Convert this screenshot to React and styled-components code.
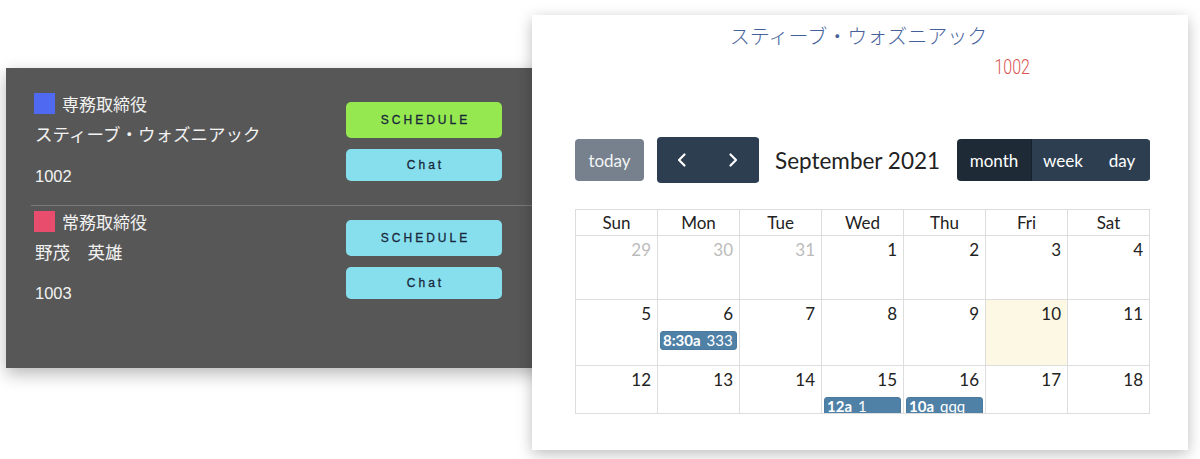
import React from "react"
import styled, { createGlobalStyle } from "styled-components"

const GlobalStyle = createGlobalStyle`
  html, body {
    margin: 0;
    padding: 0;
    background: #ffffff;
  }
  * {
    box-sizing: border-box;
  }
`

const Desktop = styled.div`
  position: relative;
  width: 1200px;
  height: 459px;
  overflow: hidden;
  background: #ffffff;
`

const MemberWindow = styled.div`
  position: absolute;
  left: 6px;
  top: 68px;
  width: 560px;
  height: 300px;
  background: #575757;
  box-shadow: 0 6px 16px rgba(0, 0, 0, 0.28);
  padding-top: 23px;
  font-family: "Liberation Sans", "Noto Sans CJK JP", sans-serif;
  color: #f2f2f2;
`

const MemberBlock = styled.div`
  display: flex;
  padding-left: 28px;
  height: ${(p) => p.h}px;
`

const MemberInfo = styled.div`
  width: 312px;
  display: flex;
  flex-direction: column;
`

const RoleRow = styled.div`
  display: flex;
  align-items: center;
  gap: 7px;
  height: 24px;
  font-size: 17px;
`

const RoleMark = styled.span`
  width: 21px;
  height: 21px;
  background: ${(p) => p.color};
`

const MemberName = styled.div`
  margin-top: 8px;
  line-height: 24px;
  font-size: 17.5px;
  padding-left: 1px;
`

const MemberNo = styled.div`
  margin-top: ${(p) => p.gap}px;
  line-height: 24px;
  font-size: 16.5px;
  padding-left: 1px;
`

const ButtonColumn = styled.div`
  display: flex;
  flex-direction: column;
  gap: 11px;
  padding-top: 11px;
`

const ActionButton = styled.button`
  width: 156px;
  height: ${(p) => p.h}px;
  border: none;
  border-radius: 5px;
  background: ${(p) => (p.active ? "#95e84f" : "#87dfee")};
  color: #18273a;
  font-family: "Liberation Sans", Arial, sans-serif;
  font-size: 12px;
  font-weight: 400;
  letter-spacing: 3px;
  padding: 0 0 0 3px;
  -webkit-text-stroke: 0.3px #18273a;
  cursor: pointer;
`

const Divider = styled.div`
  margin-left: 25px;
  height: 1px;
  background: #7a7a7a;
  margin-bottom: 3px;
`

const CalendarWindow = styled.div`
  position: absolute;
  left: 532px;
  top: 15px;
  width: 656px;
  height: 435px;
  background: #ffffff;
  box-shadow: 0 4px 14px rgba(0, 0, 0, 0.26);
  z-index: 2;
  padding: 7px 38px 0 43px;
`

const CalendarTitle = styled.div`
  text-align: center;
  margin-left: -8px;
  line-height: 28px;
  font-family: "Noto Sans CJK JP", sans-serif;
  font-weight: 300;
  font-size: 20px;
  color: #46619a;
`

const StaffNo = styled.div`
  text-align: right;
  padding-right: 158px;
  margin-top: 5px;
  line-height: 24px;
  font-family: Roboto, sans-serif;
  font-weight: 300;
  font-size: 21px;
  color: #d9534f;
  transform: scaleX(0.76);
  transform-origin: right center;
`

const Toolbar = styled.div`
  margin-top: 58px;
  display: flex;
  align-items: center;
  height: 46px;
  font-family: Lato, sans-serif;
`

const TodayButton = styled.button`
  width: 69px;
  height: 42px;
  border: none;
  border-radius: 4px;
  background: #76818d;
  color: #f2f4f6;
  font-family: Lato, sans-serif;
  font-size: 17px;
  padding: 0;
`

const ButtonGroup = styled.div`
  display: flex;
  border-radius: 4px;
  overflow: hidden;
  height: ${(p) => p.h}px;
  margin-left: ${(p) => p.ml || "0"};
`

const GroupButton = styled.button`
  width: ${(p) => p.w}px;
  height: 100%;
  border: none;
  background: ${(p) => (p.active ? "#1e2a36" : "#2c3e50")};
  border-right: 1px solid ${(p) => (p.active ? "#17212b" : "#2c3e50")};
  color: #ffffff;
  font-family: Lato, sans-serif;
  font-size: 17px;
  padding: 0;
  display: flex;
  align-items: center;
  justify-content: center;
`

const MonthTitle = styled.h2`
  margin: 0 0 0 16px;
  font-family: Lato, sans-serif;
  font-weight: 400;
  font-size: 22.5px;
  color: #222;
`

const Grid = styled.div`
  margin-top: 26px;
  width: 575px;
  height: 205px;
  overflow: hidden;
  border-left: 1px solid #dddddd;
  border-top: 1px solid #dddddd;
  border-bottom: 1px solid #dddddd;
  font-family: Lato, sans-serif;
`

const Row = styled.div`
  display: grid;
  grid-template-columns: repeat(7, 82px);
  height: ${(p) => p.h}px;
`

const HeadCell = styled.div`
  border-right: 1px solid #dddddd;
  border-bottom: 1px solid #dddddd;
  text-align: center;
  line-height: 25px;
  font-size: 17px;
  color: #222;
`

const DayCell = styled.div`
  border-right: 1px solid #dddddd;
  border-bottom: 1px solid #dddddd;
  background: ${(p) => (p.today ? "#fcf8e3" : "#ffffff")};
  padding: 2px 2px 0 2px;
  display: flex;
  flex-direction: column;
`

const DayNumber = styled.div`
  text-align: right;
  padding-right: 4px;
  line-height: 24px;
  font-size: 17px;
  color: ${(p) => (p.other ? "#bbbbbb" : "#222")};
`

const EventBar = styled.div`
  margin-top: 5px;
  height: 19px;
  border-radius: 3px;
  background: #4f81a7;
  border: 1px solid #4a7aa0;
  color: #ffffff;
  font-size: 15px;
  line-height: 17px;
  padding-left: 2px;
  white-space: nowrap;
  overflow: hidden;
`

const EventTime = styled.span`
  font-weight: 700;
  margin-right: 6px;
`

const Chevron = ({ dir }) => (
  <svg width="12" height="16" viewBox="0 0 12 16" fill="none">
    <path
      d={dir === "left" ? "M8.5 2.5L3 8l5.5 5.5" : "M3.5 2.5L9 8l-5.5 5.5"}
      stroke="#ffffff"
      strokeWidth="2.2"
      strokeLinecap="round"
      strokeLinejoin="round"
    />
  </svg>
)

const members = [
  { role: "専務取締役", color: "#4f6af0", name: "スティーブ・ウォズニアック", no: "1002", active: true, h: 114, gap: 17 },
  { role: "常務取締役", color: "#e84d6d", name: "野茂　英雄", no: "1003", active: false, h: 110, gap: 16 },
]

const dayNames = ["Sun", "Mon", "Tue", "Wed", "Thu", "Fri", "Sat"]

const weeks = [
  {
    h: 64,
    days: [
      { n: 29, other: true },
      { n: 30, other: true },
      { n: 31, other: true },
      { n: 1 },
      { n: 2 },
      { n: 3 },
      { n: 4 },
    ],
  },
  {
    h: 66,
    days: [
      { n: 5 },
      { n: 6, ev: { t: "8:30a", title: "333" } },
      { n: 7 },
      { n: 8 },
      { n: 9 },
      { n: 10, today: true },
      { n: 11 },
    ],
  },
  {
    h: 66,
    days: [
      { n: 12 },
      { n: 13 },
      { n: 14 },
      { n: 15, ev: { t: "12a", title: "1" } },
      { n: 16, ev: { t: "10a", title: "qqq" } },
      { n: 17 },
      { n: 18 },
    ],
  },
]

const App = () => {
  return (
    <Desktop>
      <GlobalStyle />

      <MemberWindow>
        {members.map((m, i) => (
          <React.Fragment key={m.no}>
            <MemberBlock h={m.h}>
              <MemberInfo>
                <RoleRow>
                  <RoleMark color={m.color} />
                  {m.role}
                </RoleRow>
                <MemberName>{m.name}</MemberName>
                <MemberNo gap={m.gap}>{m.no}</MemberNo>
              </MemberInfo>
              <ButtonColumn>
                <ActionButton h={36} active={m.active}>SCHEDULE</ActionButton>
                <ActionButton h={32}>Chat</ActionButton>
              </ButtonColumn>
            </MemberBlock>
            {i === 0 && <Divider />}
          </React.Fragment>
        ))}
      </MemberWindow>

      <CalendarWindow>
        <CalendarTitle>スティーブ・ウォズニアック</CalendarTitle>
        <StaffNo>1002</StaffNo>

        <Toolbar>
          <TodayButton>today</TodayButton>
          <ButtonGroup h={46} ml="13px">
            <GroupButton w={51}>
              <Chevron dir="left" />
            </GroupButton>
            <GroupButton w={51}>
              <Chevron dir="right" />
            </GroupButton>
          </ButtonGroup>
          <MonthTitle>September 2021</MonthTitle>
          <ButtonGroup h={42} ml="auto">
            <GroupButton w={75} active>month</GroupButton>
            <GroupButton w={63}>week</GroupButton>
            <GroupButton w={55}>day</GroupButton>
          </ButtonGroup>
        </Toolbar>

        <Grid>
          <Row h={26}>
            {dayNames.map((d) => (
              <HeadCell key={d}>{d}</HeadCell>
            ))}
          </Row>
          {weeks.map((w, wi) => (
            <Row h={w.h} key={wi}>
              {w.days.map((d) => (
                <DayCell key={d.n} today={d.today}>
                  <DayNumber other={d.other}>{d.n}</DayNumber>
                  {d.ev && (
                    <EventBar>
                      <EventTime>{d.ev.t}</EventTime>
                      {d.ev.title}
                    </EventBar>
                  )}
                </DayCell>
              ))}
            </Row>
          ))}
        </Grid>
      </CalendarWindow>
    </Desktop>
  )
}

export default App
